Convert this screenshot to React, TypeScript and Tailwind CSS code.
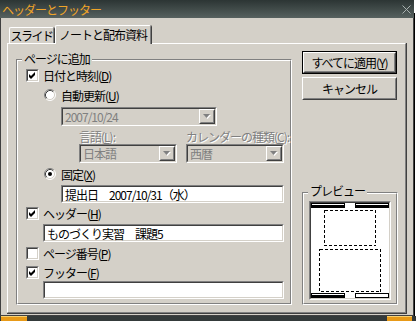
import React from 'react';

type BoxProps = {
  className?: string;
  inner?: string;
  children?: React.ReactNode;
};

// classic 3d frames
const Sunken = ({ className = '', inner = '', children }: BoxProps) => (
  <div
    className={`border border-t-[#808080] border-l-[#808080] border-r-white border-b-white ${className}`}
  >
    <div
      className={`h-full w-full border border-t-[#404040] border-l-[#404040] border-r-[#d4d0c8] border-b-[#d4d0c8] ${inner}`}
    >
      {children}
    </div>
  </div>
);

const Raised = ({ className = '', inner = '', children }: BoxProps) => (
  <div
    className={`border border-t-white border-l-white border-r-[#404040] border-b-[#404040] ${className}`}
  >
    <div
      className={`h-full w-full border border-t-[#d4d0c8] border-l-[#d4d0c8] border-r-[#808080] border-b-[#808080] ${inner}`}
    >
      {children}
    </div>
  </div>
);

const Group = ({
  label,
  labelTop,
  className = '',
  inner = '',
  children,
}: BoxProps & { label: string; labelTop: string }) => (
  <div
    className={`relative border border-t-[#808080] border-l-[#808080] border-r-white border-b-white ${className}`}
  >
    <div
      className={`h-full w-full border border-t-white border-l-white border-r-[#808080] border-b-[#808080] ${inner}`}
    >
      {children}
    </div>
    <span
      className={`absolute left-[5px] ${labelTop} bg-[#d4d0c8] px-[2px] leading-[14px]`}
    >
      {label}
    </span>
  </div>
);

const Key = ({ children }: { children: React.ReactNode }) => (
  <span className="underline underline-offset-[1px]">{children}</span>
);

const CheckBox = ({ checked }: { checked?: boolean }) => (
  <Sunken
    className="h-[13px] w-[13px] shrink-0"
    inner="flex items-center justify-center bg-white"
  >
    {checked && (
      <svg width="7" height="7" viewBox="0 0 7 7">
        <path d="M0 2L2 4L6 0L6 3L2 7L0 5Z" fill="#000" />
      </svg>
    )}
  </Sunken>
);

const Radio = ({ checked }: { checked?: boolean }) => (
  <svg width="12" height="12" viewBox="0 0 12 12" className="shrink-0">
    <circle cx="6" cy="6" r="5" fill="#fff" />
    <path d="M2.11 9.89A5.5 5.5 0 0 1 9.89 2.11" stroke="#808080" fill="none" />
    <path d="M9.89 2.11A5.5 5.5 0 0 1 2.11 9.89" stroke="#fff" fill="none" />
    <path d="M2.82 9.18A4.5 4.5 0 0 1 9.18 2.82" stroke="#404040" fill="none" />
    <path d="M9.18 2.82A4.5 4.5 0 0 1 2.82 9.18" stroke="#d4d0c8" fill="none" />
    {checked && <circle cx="6" cy="6" r="2" fill="#000" />}
  </svg>
);

const Arrow = () => (
  <svg width="8" height="5" viewBox="0 0 8 5">
    <path d="M1 1H8L4.5 5Z" fill="#fff" />
    <path d="M0 0H7L3.5 4Z" fill="#808080" />
  </svg>
);

const Combo = ({ value, className = '' }: { value: string; className?: string }) => (
  <Sunken className={`h-[19px] ${className}`} inner="flex items-stretch bg-[#d4d0c8]">
    <span className="flex flex-1 items-center pl-[2px] text-[#808080]">{value}</span>
    <Raised className="w-[16px]" inner="flex items-center justify-center">
      <Arrow />
    </Raised>
  </Sunken>
);

const TextBox = ({ value, className = '' }: { value?: string; className?: string }) => (
  <Sunken
    className={`h-[18px] ${className}`}
    inner="flex items-center bg-white pl-[2px] whitespace-pre"
  >
    {value}
  </Sunken>
);

const Disabled = ({ children, className = '' }: { children: React.ReactNode; className?: string }) => (
  <span className={`text-[#808080] [text-shadow:1px_1px_0_#fff] ${className}`}>{children}</span>
);

const PushButton = ({ children, isDefault }: { children: React.ReactNode; isDefault?: boolean }) => {
  const face = (
    <Raised className="h-full w-full" inner="flex items-center justify-center">
      {children}
    </Raised>
  );
  return isDefault ? (
    <div className="h-[23px] w-[95px] border border-black">{face}</div>
  ) : (
    <div className="h-[23px] w-[95px]">{face}</div>
  );
};

const Preview = () => (
  <svg width="78" height="95" viewBox="0 0 78 95" shapeRendering="crispEdges">
    <rect x="0" y="0" width="34" height="5" fill="#000" />
    <rect x="1" y="1" width="32" height="1" fill="#fff" />
    <rect x="44" y="0" width="34" height="5" fill="#000" />
    <rect x="45" y="1" width="32" height="1" fill="#fff" />
    <rect x="13.5" y="7.5" width="51" height="35" fill="none" stroke="#000" strokeDasharray="3 2" />
    <rect x="8.5" y="46.5" width="61" height="42" fill="none" stroke="#000" strokeDasharray="3 2" />
    <rect x="0" y="90" width="34" height="5" fill="#000" />
    <rect x="1" y="91" width="32" height="1" fill="#fff" />
    <rect x="44.5" y="90.5" width="33" height="4" fill="none" stroke="#000" />
  </svg>
);

export default function App() {
  return (
    <div className="flex h-[321px] w-[416px] flex-col overflow-hidden bg-white font-['Noto_Sans_CJK_JP','Noto_Sans_CJK_SC',sans-serif] text-[12px] leading-[13px] tracking-[-1px] text-black">
      <div className="flex h-[316px]">
        <div className="flex w-[414px] flex-col">
          {/* title bar */}
          <div className="flex h-[18px] items-center justify-between bg-gradient-to-b from-[#2c3534] to-[#56615f] pl-[2px] pr-[3px]">
            <span className="text-[#f0a428]">ヘッダーとフッター</span>
            <svg width="9" height="9" viewBox="0 0 9 9">
              <path d="M0.5 0.5L8.5 8.5M8.5 0.5L0.5 8.5" stroke="#a9b1b0" />
            </svg>
          </div>

          {/* body */}
          <div className="flex h-[298px] flex-col border-b border-l border-r border-[#404040] bg-[#d4d0c8]">
            {/* tabs */}
            <div className="flex h-[25px] items-end pl-[8px]">
              <div className="h-[16px] w-[46px] rounded-tr-[2px] border-r border-[#404040]">
                <div className="flex h-full items-center justify-center whitespace-nowrap rounded-t-[2px] border-l border-r border-t border-l-white border-r-[#808080] border-t-white tracking-[-1.5px]">
                  スライド
                </div>
              </div>
              <div className="relative z-10 -mb-px h-[19px] w-[97px] rounded-tr-[2px] border-r border-[#404040] bg-[#d4d0c8]">
                <div className="flex h-full items-center justify-center whitespace-nowrap rounded-t-[2px] border-l border-r border-t border-l-white border-r-[#808080] border-t-white pb-[1px]">
                  ノートと配布資料
                </div>
              </div>
            </div>

            {/* tab panel */}
            <div className="ml-[6px] h-[271px] w-[400px] border-b border-r border-[#404040]">
              <div className="flex h-full items-start border border-b-[#808080] border-l-white border-r-[#808080] border-t-white pl-[8px]">
                <Group
                  label="ページに追加"
                  labelTop="top-[-8px]"
                  className="mt-[15px] h-[246px] w-[276px] shrink-0"
                  inner="flex flex-col"
                >
                  <div className="ml-[8px] mt-[8px] flex h-[13px] items-center gap-[4px]">
                    <CheckBox checked />
                    <span>
                      日付と時刻(<Key>D</Key>)
                    </span>
                  </div>
                  <div className="ml-[26px] mt-[7px] flex h-[12px] items-center gap-[5px]">
                    <Radio />
                    <span>
                      自動更新(<Key>U</Key>)
                    </span>
                  </div>
                  <Combo value="2007/10/24" className="ml-[43px] mt-[6px] w-[156px]" />
                  <div className="mt-[4px] flex h-[12px] items-center">
                    <Disabled className="ml-[61px] w-[107px]">
                      言語(<Key>L</Key>):
                    </Disabled>
                    <Disabled>
                      カレンダーの種類(<Key>C</Key>):
                    </Disabled>
                  </div>
                  <div className="mt-[2px] flex gap-[9px]">
                    <Combo value="日本語" className="ml-[61px] w-[98px]" />
                    <Combo value="西暦" className="w-[98px]" />
                  </div>
                  <div className="ml-[26px] mt-[5px] flex h-[12px] items-center gap-[5px]">
                    <Radio checked />
                    <span>
                      固定(<Key>X</Key>)
                    </span>
                  </div>
                  <TextBox value="提出日　2007/10/31（水）" className="ml-[43px] mt-[5px] w-[223px]" />
                  <div className="ml-[8px] mt-[4px] flex h-[13px] items-center gap-[4px]">
                    <CheckBox checked />
                    <span>
                      ヘッダー(<Key>H</Key>)
                    </span>
                  </div>
                  <TextBox value="ものづくり実習　課題5" className="ml-[25px] mt-[4px] w-[241px]" />
                  <div className="ml-[8px] mt-[5px] flex h-[13px] items-center gap-[4px]">
                    <CheckBox />
                    <span>
                      ページ番号(<Key>P</Key>)
                    </span>
                  </div>
                  <div className="ml-[8px] mt-[6px] flex h-[13px] items-center gap-[4px]">
                    <CheckBox checked />
                    <span>
                      フッター(<Key>F</Key>)
                    </span>
                  </div>
                  <TextBox className="ml-[25px] mt-[2px] w-[241px]" />
                </Group>

                <div className="ml-[10px] mt-[7px] flex w-[96px] flex-col">
                  <PushButton isDefault>
                    すべてに適用(<Key>Y</Key>)
                  </PushButton>
                  <div className="mt-[3px]">
                    <PushButton>キャンセル</PushButton>
                  </div>
                  <Group
                    label="プレビュー"
                    labelTop="top-[-9px]"
                    className="mt-[92px] h-[113px] w-[96px]"
                    inner="pl-[5px] pt-[7px]"
                  >
                    <Sunken className="h-[99px] w-[82px]" inner="bg-white">
                      <Preview />
                    </Sunken>
                  </Group>
                </div>
              </div>
            </div>
          </div>
        </div>
        {/* spreadsheet behind the dialog */}
        <div className="mt-[13px] w-[2px] border-l border-black bg-white" />
      </div>
      {/* taskbar */}
      <div className="flex h-[5px] justify-between bg-[#343a3a]">
        <div className="ml-[1px] w-[26px] border-t border-[#f8d070] bg-[#e89a18]" />
        <div className="mr-[4px] w-[25px] border-t border-[#f8d070] bg-[#e89a18]" />
      </div>
    </div>
  );
}
